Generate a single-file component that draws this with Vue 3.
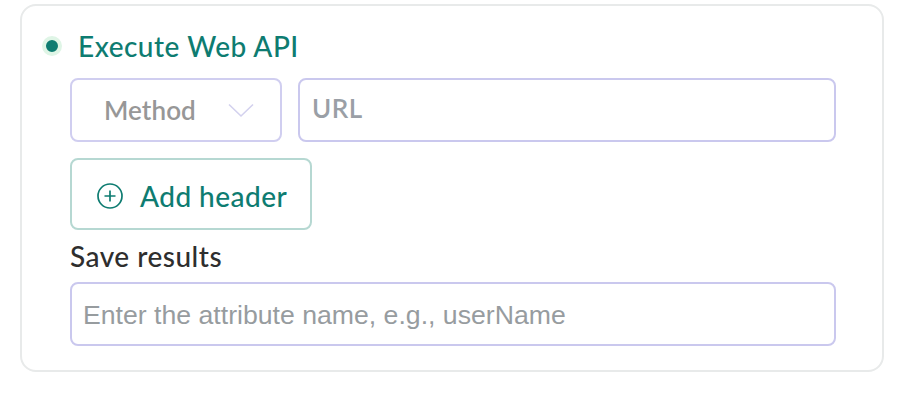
<template>
  <div class="page">
    <div class="card">
      <!-- step title -->
      <div class="step-head">
        <span class="dot"></span>
        <span class="step-title">Execute Web API</span>
      </div>

      <div class="step-body">
        <div class="request-row">
          <div class="method-select">
            <span class="method-label">Method</span>
            <svg class="chevron" width="28" height="16" viewBox="0 0 28 16" fill="none">
              <path d="M2 2.5 L14 14 L26 2.5" stroke="#d3d1ee" stroke-width="1.6" />
            </svg>
          </div>
          <input class="url-input" type="text" placeholder="URL" />
        </div>

        <button class="add-btn" type="button">
          <svg class="plus" width="26" height="26" viewBox="0 0 26 26" fill="none">
            <circle cx="13" cy="13" r="12" stroke="#0e7c71" stroke-width="1.7" />
            <path d="M13 7.5 V18.5 M7.5 13 H18.5" stroke="#0e7c71" stroke-width="1.7" />
          </svg>
          <span>Add header</span>
        </button>

        <div class="field-label">Save results</div>
        <input class="attr-input" type="text" placeholder="Enter the attribute name, e.g., userName" />
      </div>
    </div>
  </div>
</template>

<script setup>
</script>

<style>
body {
  background: #ffffff;
}
</style>

<style scoped>
.page {
  width: 902px;
  height: 406px;
  padding: 4px 18px 0 20px;
  box-sizing: border-box;
  font-family: Lato, "Open Sans", sans-serif;
}

.card {
  height: 368px;
  box-sizing: border-box;
  border: 2px solid #e8eaea;
  border-radius: 16px;
  padding: 25px 46px 24px 20px;
  background: #fff;
}

.step-head {
  display: flex;
  align-items: center;
  height: 30px;
  gap: 16px;
}

.dot {
  width: 12px;
  height: 12px;
  border-radius: 50%;
  background: #0e7c71;
  border: 4px solid #dff5e6;
  flex: none;
}

.step-title {
  font-size: 28px;
  font-weight: 500;
  letter-spacing: 0.5px;
  color: #0e7c71;
}

.step-body {
  margin: 17px 0 0 28px;
}

.request-row {
  display: flex;
  gap: 16px;
}

.method-select {
  width: 212px;
  height: 64px;
  box-sizing: border-box;
  border: 2px solid #d0cef0;
  border-radius: 8px;
  display: flex;
  align-items: center;
  padding-left: 32px;
  gap: 31px;
}

.method-label {
  font-size: 26px;
  font-weight: 600;
  letter-spacing: 0.1px;
  color: #979797;
}

.url-input {
  flex: 1;
  min-width: 0;
  height: 64px;
  box-sizing: border-box;
  border: 2px solid #cac8ee;
  border-radius: 8px;
  padding: 0 12px 4px;
  font-family: inherit;
  font-size: 26px;
  font-weight: 600;
  letter-spacing: 0.5px;
  outline: none;
}

.url-input::placeholder {
  color: #9a9fa6;
  opacity: 1;
}

.add-btn {
  display: flex;
  align-items: center;
  gap: 17px;
  width: 242px;
  height: 72px;
  box-sizing: border-box;
  margin-top: 16px;
  padding: 4px 0 0 25px;
  border: 2px solid #b6d8d2;
  border-radius: 8px;
  background: #fff;
  color: #0e7c71;
  font-family: inherit;
  font-size: 28px;
  font-weight: 500;
  letter-spacing: 0.45px;
}

.plus {
  margin-bottom: 1px;
}

.field-label {
  margin-top: 10px;
  height: 42px;
  line-height: 32px;
  font-size: 28px;
  font-weight: 500;
  letter-spacing: 0.5px;
  color: #2e2e2e;
}

.attr-input {
  display: block;
  width: 100%;
  height: 64px;
  box-sizing: border-box;
  border: 2px solid #cac8ee;
  border-radius: 8px;
  padding: 2px 11px 0;
  font-family: "Liberation Sans", Arial, sans-serif;
  font-size: 26.65px;
  outline: none;
}

.attr-input::placeholder {
  color: #979c9f;
  opacity: 1;
}
</style>
